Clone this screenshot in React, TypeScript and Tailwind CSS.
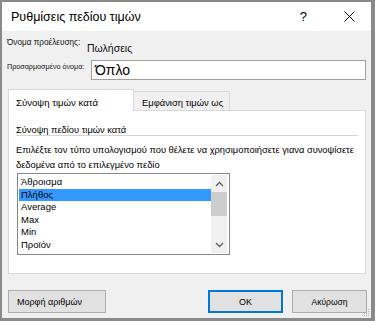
import React from "react";

const Chevron = ({ up }: { up?: boolean }) => (
  <svg width="9" height="6" viewBox="0 0 9 6" className="block">
    <path
      d={up ? "M1 5 L4.5 1.5 L8 5" : "M1 1 L4.5 4.5 L8 1"}
      fill="none"
      stroke="#606060"
      strokeWidth="1.3"
    />
  </svg>
);

export default function App() {
  const items = ["Άθροισμα", "Πλήθος", "Average", "Max", "Min", "Προϊόν"];
  return (
    <div
      className="w-[375px] h-[321px] bg-[#8a8a8a] pt-[2px] pl-[2px] overflow-hidden text-black whitespace-nowrap"
      style={{ fontFamily: '"Liberation Sans", Arial, sans-serif' }}
    >
      <div className="w-[369px] h-[316px] bg-[#f0f0f0] flex flex-col relative">
        {/* Title bar */}
        <div className="h-[29px] bg-white flex items-center pl-[9px] shrink-0">
          <span className="text-[12.5px] leading-[16px]">Ρυθμίσεις πεδίου τιμών</span>
          <span className="ml-auto text-[13px] leading-[16px] mr-[37px]">?</span>
          <svg width="11" height="11" viewBox="0 0 11 11" className="mr-[16px]">
            <path d="M0.5 0.5 L10.5 10.5 M10.5 0.5 L0.5 10.5" stroke="#000" strokeWidth="1" />
          </svg>
        </div>

        <div className="px-[5px] flex flex-col shrink-0">
          {/* Row 1 */}
          <div className="flex items-start mt-[5px] h-[20px]">
            <span className="w-[80px] text-[8.2px] leading-[14px] text-[#111]">Όνομα προέλευσης:</span>
            <span className="text-[10.5px] leading-[14px] mt-[5px] text-[#111]">Πωλήσεις</span>
          </div>
          {/* Row 2 */}
          <div className="flex items-start mt-[4px]">
            <span className="w-[84px] text-[7.2px] leading-[12px] mt-[1px] text-[#111] overflow-hidden">Προσαρμοσμένο όνομα:</span>
            <div className="w-[275px] h-[20px] border border-[#a0a0a0] bg-white pl-[3px] flex items-center">
              <span className="text-[14px] leading-[18px]">Όπλο</span>
            </div>
          </div>
        </div>

        {/* Tabs */}
        <div className="ml-[6px] mt-[9px] flex items-end -mb-[1px] relative z-10 shrink-0">
          <div className="w-[126px] h-[22px] bg-white border-t border-l border-r border-[#d9d9d9] pl-[7px] pt-[7px]">
            <span className="text-[9.6px] leading-[12px] block">Σύνοψη τιμών κατά</span>
          </div>
          <div className="w-[96px] h-[20px] bg-[#f0f0f0] border-t border-r border-b border-[#d9d9d9] pl-[8px] pt-[5px]">
            <span className="text-[9.4px] leading-[12px] block">Εμφάνιση τιμών ως</span>
          </div>
        </div>

        {/* Panel */}
        <div className="ml-[6px] w-[358px] h-[164px] bg-white border border-[#d9d9d9] flex flex-col shrink-0">
          <div className="pl-[7px] pt-[14px] text-[9.3px] leading-[10px]">Σύνοψη πεδίου τιμών κατά</div>
          <div className="ml-[7px] mr-[7px] h-[1px] bg-[#d5d5d5]"></div>
          <div className="pl-[7px] mt-[7px] text-[9.3px] leading-[15px]">
            Επιλέξτε τον τύπο υπολογισμού που θέλετε να χρησιμοποιήσετε γιανα συνοψίσετε
            <br />
            δεδομένα από το επιλεγμένο πεδίο
          </div>
          <div className="ml-[8px] w-[213px] h-[82px] border border-[#828790] p-[1px] flex">
            <div className="w-[192px] pt-[1px] flex flex-col">
              {items.map((it, i) => (
                <div
                  key={it}
                  className={
                    "h-[12.6px] pl-[2px] text-[9.5px] leading-[12.6px] " +
                    (i === 1 ? "bg-[#3399ff]" : "")
                  }
                >
                  {it}
                </div>
              ))}
            </div>
            <div className="w-[16px] ml-auto mr-[1px] bg-[#f0f0f0] flex flex-col">
              <div className="h-[17px] flex items-center justify-center">
                <Chevron up />
              </div>
              <div className="h-[24px] bg-[#cdcdcd]"></div>
              <div className="flex-1"></div>
              <div className="h-[17px] flex items-center justify-center">
                <Chevron />
              </div>
            </div>
          </div>
        </div>

        {/* Buttons */}
        <div className="flex mt-[16px] pl-[6px] shrink-0">
          <div className="w-[98px] h-[23px] bg-[#e1e1e1] border border-[#adadad] pl-[8px] flex items-center">
            <span className="text-[9px] leading-[12px]">Μορφή αριθμών</span>
          </div>
          <div className="ml-auto w-[75px] h-[23px] bg-[#e1e1e1] border-2 border-[#0078d7] flex items-center justify-center">
            <span className="text-[9px] leading-[12px]">OK</span>
          </div>
          <div className="ml-[9px] mr-[4px] w-[75px] h-[23px] bg-[#e1e1e1] border border-[#adadad] flex items-center justify-center">
            <span className="text-[8.5px] leading-[12px]">Ακύρωση</span>
          </div>
        </div>

        {/* resize grip */}
        <svg width="8" height="8" viewBox="0 0 8 8" className="absolute right-[1px] bottom-[1px]">
          <rect x="6" y="0" width="1" height="1" fill="#b0b0b0" />
          <rect x="4" y="2" width="1" height="1" fill="#b0b0b0" />
          <rect x="6" y="2" width="1" height="1" fill="#b0b0b0" />
          <rect x="2" y="4" width="1" height="1" fill="#b0b0b0" />
          <rect x="4" y="4" width="1" height="1" fill="#b0b0b0" />
          <rect x="6" y="4" width="1" height="1" fill="#b0b0b0" />
          <rect x="0" y="6" width="1" height="1" fill="#b0b0b0" />
          <rect x="2" y="6" width="1" height="1" fill="#b0b0b0" />
          <rect x="4" y="6" width="1" height="1" fill="#b0b0b0" />
          <rect x="6" y="6" width="1" height="1" fill="#b0b0b0" />
        </svg>
      </div>
    </div>
  );
}
